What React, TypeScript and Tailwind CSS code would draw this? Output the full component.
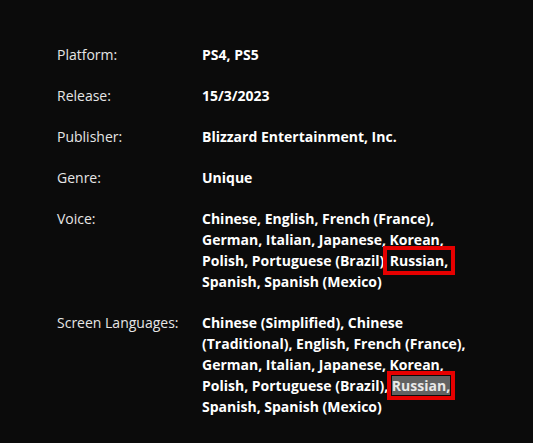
import React from 'react';

const rows: { label: string; value: React.ReactNode }[] = [
  { label: 'Platform:', value: 'PS4, PS5' },
  { label: 'Release:', value: '15/3/2023' },
  { label: 'Publisher:', value: 'Blizzard Entertainment, Inc.' },
  { label: 'Genre:', value: 'Unique' },
  {
    label: 'Voice:',
    value: (
      <>
        Chinese, English, French (France), German, Italian, Japanese, Korean, Polish, Portuguese (Brazil){' '}
        <span className="-ml-[1px] outline-[4px] outline-solid outline-[#e60000] px-[3px] py-[1px]">Russian,</span>{' '}
        Spanish, Spanish (Mexico)
      </>
    ),
  },
  {
    label: 'Screen Languages:',
    value: (
      <>
        Chinese (Simplified), Chinese (Traditional), English, French (France), German, Italian, Japanese,
        Korean, Polish, Portuguese (Brazil),{' '}
        <span className="outline-[4px] outline-offset-[1px] outline-solid outline-[#e60000] bg-[#626262] text-[#e8e8e8]">
          Russian,
        </span>{' '}
        Spanish, Spanish (Mexico)
      </>
    ),
  },
];

export default function App() {
  return (
    <div
      className="min-h-[443px] w-full bg-[#0b0b0b] pl-[57px] pt-[44px] text-[14px] leading-[21px]"
      style={{ fontFamily: '"Open Sans", "DejaVu Sans", sans-serif' }}
    >
      <dl className="flex flex-col gap-[20px]">
        {rows.map((r) => (
          <div key={r.label} className="flex">
            <dt className="w-[145px] shrink-0 text-[#e6e6e6]">{r.label}</dt>
            <dd className="w-[265px] font-bold text-white">{r.value}</dd>
          </div>
        ))}
      </dl>
    </div>
  );
}
